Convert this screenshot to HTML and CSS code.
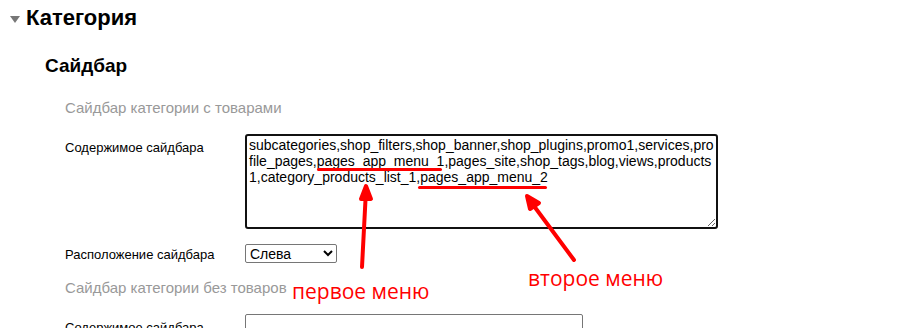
FILE: index.html
```html
<!DOCTYPE html>
<html lang="ru">
<head>
    <meta charset="utf-8">
    <link rel="stylesheet" href="styles.css">
    <title>Категория</title>
</head>
<body>
    <div class="group">
        <h2 class="group-title"><span class="caret"></span>Категория</h2>
        <h3 class="section-title">Сайдбар</h3>

        <div class="subsection">Сайдбар категории с товарами</div>
        <div class="field">
            <label class="field-name">Содержимое сайдбара</label>
            <textarea class="field-text" rows="5">subcategories,shop_filters,shop_banner,shop_plugins,promo1,services,profile_pages,pages_app_menu_1,pages_site,shop_tags,blog,views,products1,category_products_list_1,pages_app_menu_2</textarea>
        </div>
        <div class="field field-select">
            <label class="field-name">Расположение сайдбара</label>
            <select class="field-choice">
                <option>Слева</option>
                <option>Справа</option>
            </select>
        </div>

        <div class="subsection subsection-next">Сайдбар категории без товаров</div>
        <div class="field">
            <label class="field-name">Содержимое сайдбара</label>
            <textarea class="field-text small" rows="5"></textarea>
        </div>
    </div>

    <!-- пометки поверх скриншота -->
    <div class="notes">
        <span class="mark mark-1"></span>
        <span class="mark mark-2"></span>
        <svg class="arrows" width="912" height="328">
            <g stroke="#f00" stroke-width="4" stroke-linecap="round" stroke-linejoin="round" fill="#f00">
                <line x1="362" y1="267" x2="366" y2="190"/>
                <polygon points="361,199 366,186 371,199"/>
                <line x1="574" y1="260" x2="531" y2="202"/>
                <polygon points="530,209 527,196 539,203"/>
            </g>
        </svg>
        <span class="note note-1">первое меню</span>
        <span class="note note-2">второе меню</span>
    </div>
</body>
</html>
```

FILE: styles.css
```css
body {
    margin: 0;
    font-family: "Liberation Sans", Arial, sans-serif;
    color: #000;
    background: #fff;
    overflow: hidden;
}

.group {
    padding: 6px 0 0 10px;
}

.group-title {
    margin: 0;
    font-size: 22px;
    line-height: 24px;
    display: flex;
    align-items: center;
}

.caret {
    width: 0;
    height: 0;
    border-left: 5px solid transparent;
    border-right: 5px solid transparent;
    border-top: 7px solid #777;
    margin-right: 6px;
    margin-top: 2px;
}

.section-title {
    margin: 25px 0 0 35px;
    font-size: 19px;
    line-height: 22px;
}

.subsection {
    margin: 22px 0 0 55px;
    font-size: 15px;
    line-height: 18px;
    color: #999;
}

.subsection-next {
    margin-top: 16px;
}

.field {
    display: flex;
    margin: 17px 0 0 55px;
}

.field-name {
    width: 180px;
    font-size: 13px;
    line-height: 16px;
    padding-top: 6px;
}

.field-text {
    width: 473px;
    height: 95px;
    box-sizing: border-box;
    margin: 0;
    padding: 1px 2px;
    border: 2px solid #111;
    border-radius: 3px;
    font-family: "Liberation Sans", Arial, sans-serif;
    font-size: 14px;
    line-height: normal;
    outline: none;
}

.field-text.small {
    width: 338px;
    border: 1px solid #767676;
    border-radius: 2px;
}

.field-select {
    margin-top: 15px;
}

.field-select .field-name {
    padding-top: 3px;
}

.field-choice {
    width: 92px;
    height: 19px;
    margin: 0;
    font-family: "Liberation Sans", Arial, sans-serif;
    font-size: 14px;
    border: 1px solid #767676;
    border-radius: 2px;
    background: #fff;
}

.notes {
    position: absolute;
    left: 0;
    top: 0;
    width: 912px;
    height: 328px;
    pointer-events: none;
}

.arrows {
    position: absolute;
    left: 0;
    top: 0;
}

.mark {
    position: absolute;
    height: 3px;
    background: #f00;
    border-radius: 2px;
}

.mark-1 {
    left: 317px;
    top: 168px;
    width: 125px;
}

.mark-2 {
    left: 418px;
    top: 186px;
    width: 129px;
}

.note {
    position: absolute;
    font-family: "Open Sans", sans-serif;
    font-size: 21px;
    line-height: 24px;
    color: #f00;
}

.note-1 {
    left: 292px;
    top: 279px;
}

.note-2 {
    left: 528px;
    top: 266px;
}
```
